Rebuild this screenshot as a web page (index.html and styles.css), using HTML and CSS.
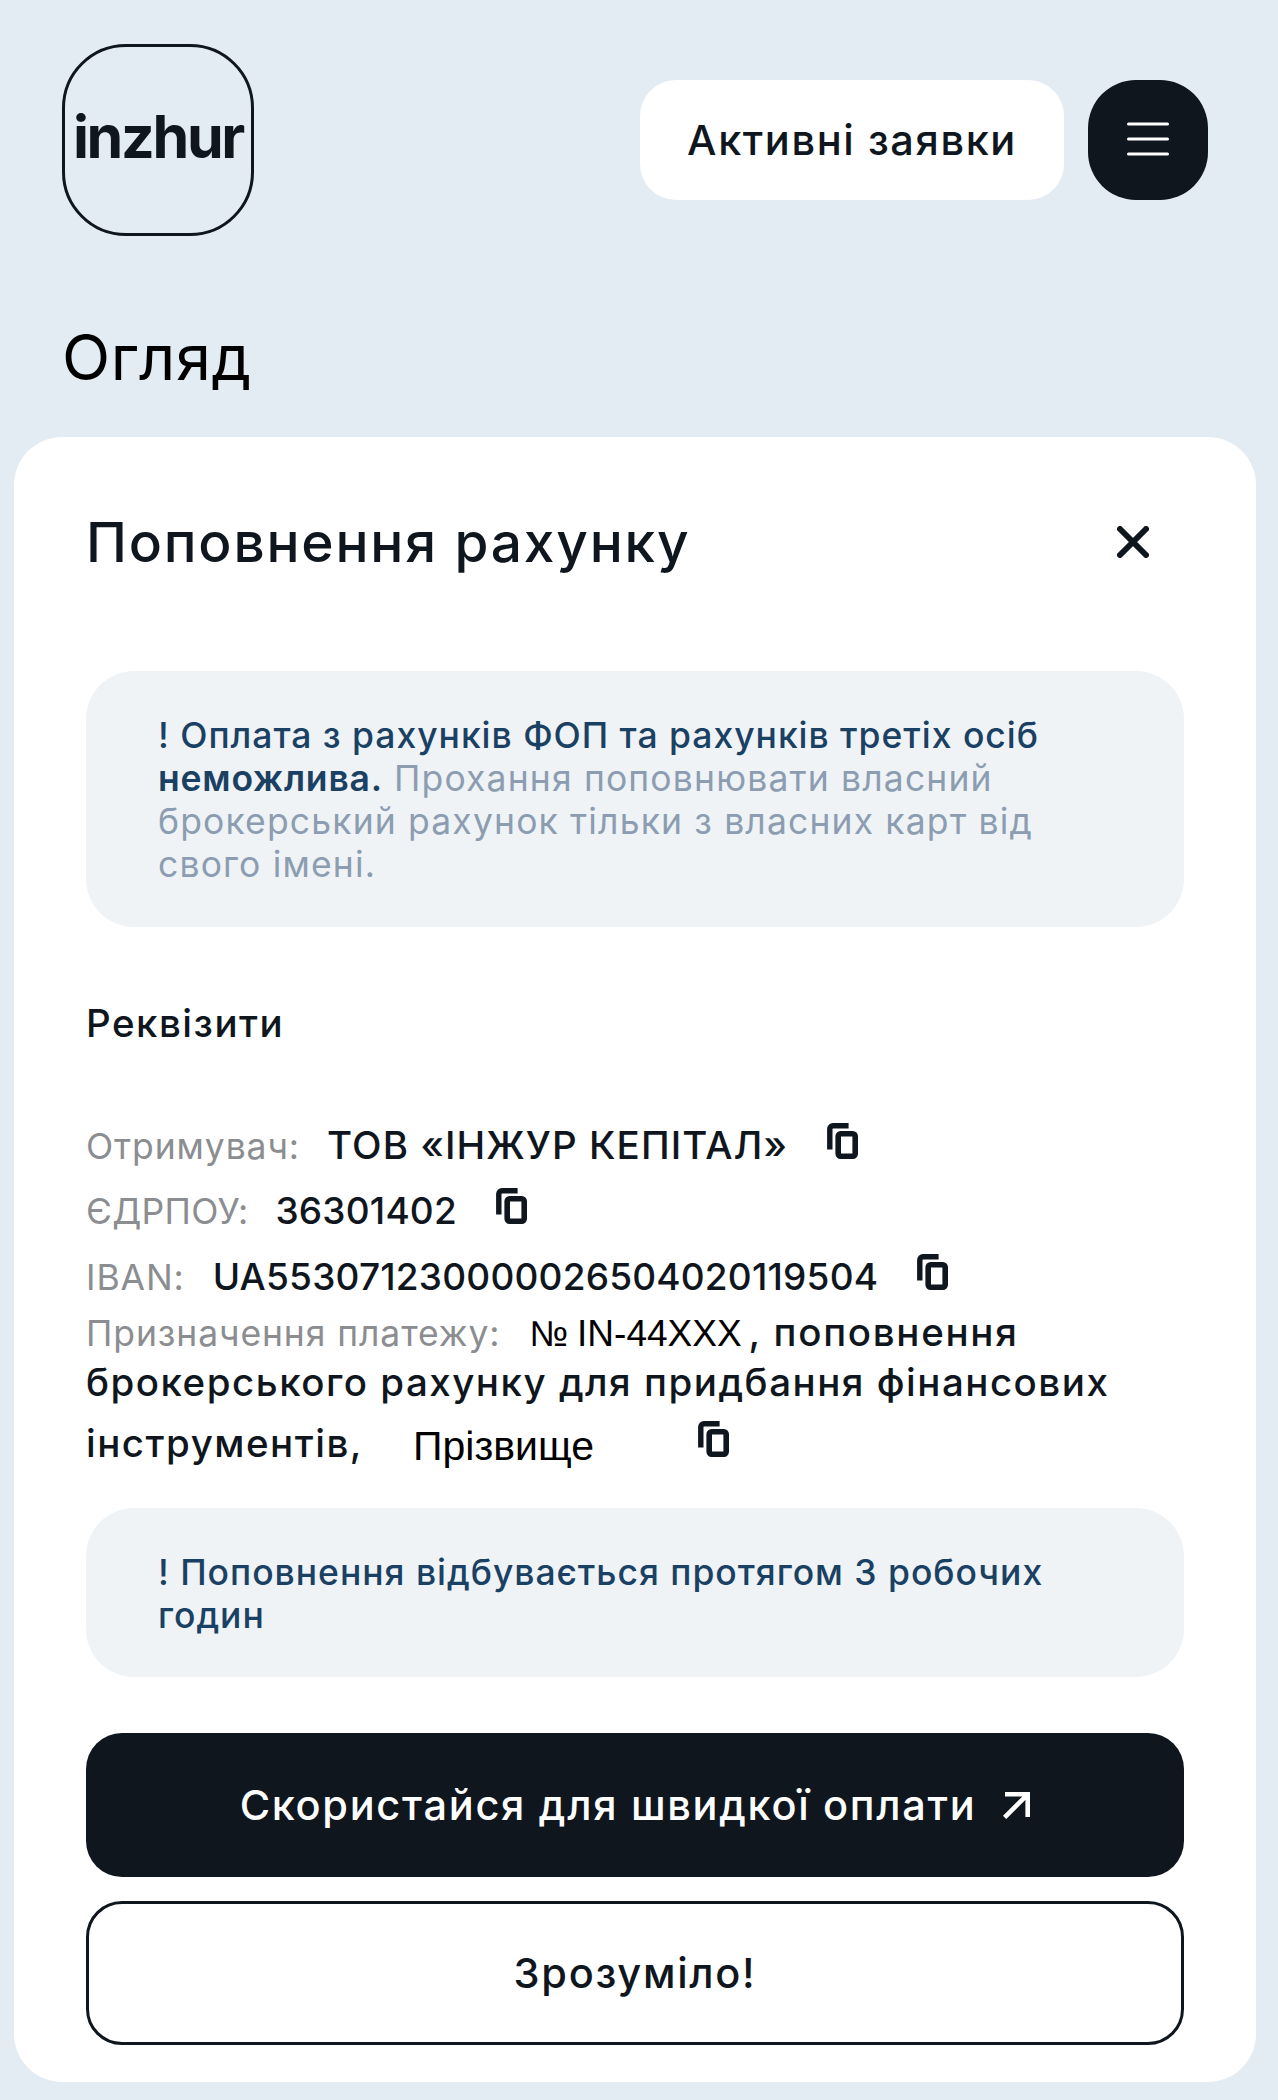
FILE: index.html
```
<!DOCTYPE html>
<html lang="uk">
<head>
  <meta charset="UTF-8">
  <meta name="viewport" content="width=device-width, initial-scale=1.0">
  <title>inzhur - Поповнення рахунку</title>
  <link rel="stylesheet" href="styles.css">
</head>
<body>
  <!-- copy icon, reused in every row -->
  <svg class="sprite" width="0" height="0">
    <symbol id="copy" viewBox="0 0 31 36">
      <path d="M2.8 26.4V6a3.2 3.2 0 0 1 3.2-3.2h15.6" fill="none" stroke="currentColor" stroke-width="5.4"/>
      <rect x="11.2" y="10.8" width="17" height="22.4" rx="2.4" fill="none" stroke="currentColor" stroke-width="5.6"/>
    </symbol>
  </svg>

  <header class="header">
    <div class="logo">inzhur</div>
    <nav class="nav">
      <button class="requests">Активні заявки</button>
      <button class="menu">
        <svg width="42" height="34" viewBox="0 0 42 34">
          <path d="M1.5 2h39M1.5 17h39M1.5 32h39" stroke="#fff" stroke-width="3" stroke-linecap="round"/>
        </svg>
      </button>
    </nav>
  </header>

  <h1 class="page-title">Огляд</h1>

  <main class="card">
    <div class="card-head">
      <h2>Поповнення рахунку</h2>
      <svg class="close" width="32" height="32" viewBox="0 0 32 32">
        <path d="M3 3l26 26M29 3L3 29" stroke="currentColor" stroke-width="6" stroke-linecap="round"/>
      </svg>
    </div>

    <div class="note">
      <b>! Оплата з рахунків ФОП та рахунків третіх осіб<br><span class="strong">неможлива.</span></b>
      Прохання поповнювати власний<br>
      брокерський рахунок тільки з власних карт від<br>
      свого імені.
    </div>

    <h3>Реквізити</h3>

    <div class="row">
      <span class="label">Отримувач:</span>
      <span class="value">ТОВ «ІНЖУР КЕПІТАЛ»</span>
      <svg class="copy"><use href="#copy"/></svg>
    </div>
    <div class="row">
      <span class="label caps">ЄДРПОУ:</span>
      <span class="value number">36301402</span>
      <svg class="copy"><use href="#copy"/></svg>
    </div>
    <div class="row">
      <span class="label iban">IBAN:</span>
      <span class="value number">UA553071230000026504020119504</span>
      <svg class="copy"><use href="#copy"/></svg>
    </div>

    <div class="purpose">
      <div class="line first">
        <span class="label">Призначення платежу:</span>
        <span class="contract"><span class="sign">№</span><span>IN-44XXX</span></span>
        <span class="tail">, поповнення</span>
      </div>
      <div class="line second">брокерського рахунку для придбання фінансових</div>
      <div class="line third">
        <span>інструментів,</span>
        <span class="surname">Прізвище</span>
        <svg class="copy"><use href="#copy"/></svg>
      </div>
    </div>

    <div class="note short">
      <b>! Поповнення відбувається протягом 3 робочих<br>годин</b>
    </div>

    <div class="actions">
      <button class="button dark">
        Скористайся для швидкої оплати
        <svg width="27" height="27" viewBox="0 0 27 27">
          <path d="M2 2.3h22.7V25M24.7 2.3L1.6 25.4" fill="none" stroke="currentColor" stroke-width="4.6"/>
        </svg>
      </button>
      <button class="button outline">Зрозуміло!</button>
    </div>
  </main>
</body>
</html>
```
FILE: styles.css
```
* {
  box-sizing: border-box;
}
body {
  margin: 0;
  padding-top: 44px;
  min-height: 2100px;
  background-color: #e3ecf2;
  color: #0f161e;
  font-family: Inter, "Liberation Sans", sans-serif;
  font-size: 38.5px;
  font-weight: 500;
}
h1, h2, h3 {
  margin: 0;
}
button {
  border: none;
  padding: 0;
  font: inherit;
  color: inherit;
  cursor: pointer;
}
.sprite {
  display: block;
}

/* header */
.header {
  display: flex;
  justify-content: space-between;
  align-items: center;
  padding: 0 70px 0 62px;
}
.logo {
  display: flex;
  justify-content: center;
  align-items: center;
  width: 192px;
  height: 192px;
  padding-bottom: 7px;
  border: 3px solid #0f161e;
  border-radius: 64px;
  font-size: 59px;
  font-weight: 700;
  letter-spacing: -2.3px;
}
.nav {
  display: flex;
  gap: 24px;
}
.requests {
  width: 424px;
  height: 120px;
  background: white;
  border-radius: 36px;
  font-size: 41.5px;
  letter-spacing: 1.6px;
}
.menu {
  display: flex;
  justify-content: center;
  align-items: center;
  width: 120px;
  height: 120px;
  padding-bottom: 3px;
  background: #0f161e;
  border-radius: 48px;
}
.page-title {
  margin: 86px 0 45px 62px;
  font-size: 63px;
  font-weight: 400;
  line-height: 70px;
  letter-spacing: 0.7px;
  color: black;
}

/* card */
.card {
  width: 1242px;
  margin-left: 14px;
  padding: 73px 72px 37px 72px;
  background: white;
  border-radius: 48px;
}
.card-head {
  display: flex;
  justify-content: space-between;
  align-items: center;
  padding-right: 35px;
}
.card-head h2 {
  font-size: 55px;
  font-weight: 500;
  line-height: 64px;
  letter-spacing: 1.8px;
}
.close {
  margin-bottom: 1px;
}
.note {
  margin-top: 97px;
  padding: 43px 40px 41px 72px;
  background: #eff3f6;
  border-radius: 48px;
  color: #8c9db1;
  font-size: 35.5px;
  font-weight: 400;
  line-height: 43px;
  letter-spacing: 1.15px;
  white-space: nowrap;
}
.note b {
  color: #1a4163;
  font-weight: 500;
  letter-spacing: 0.97px;
}
.note .strong {
  font-weight: 600;
  letter-spacing: 0.8px;
}
h3 {
  margin: 74px 0 67px;
  font-size: 38.5px;
  font-weight: 500;
  line-height: 44px;
  letter-spacing: 1.5px;
}

/* payment details */
.row {
  display: flex;
  align-items: baseline;
  height: 66px;
  line-height: 66px;
}
.label {
  margin-right: 27px;
  color: #8b8d91;
  font-size: 35.5px;
  font-weight: 400;
  letter-spacing: 0.9px;
}
.caps {
  letter-spacing: 0.3px;
}
.iban {
  margin-right: 28px;
}
.value {
  letter-spacing: 1.1px;
}
.number {
  font-size: 37px;
  letter-spacing: 0.2px;
}
.copy {
  width: 31px;
  height: 36px;
  margin: 0 0 1px 39px;
}
.line {
  display: flex;
  align-items: baseline;
  letter-spacing: 1.5px;
  white-space: nowrap;
}
.first {
  height: 44px;
  line-height: 44px;
}
.second {
  height: 56px;
  line-height: 56px;
}
.third {
  height: 66px;
  line-height: 66px;
}
.third .copy {
  margin-bottom: 0;
}
.contract {
  display: flex;
  align-items: baseline;
  gap: 9px;
  margin-left: 2px;
  color: black;
  font-family: "Liberation Sans", Arial, sans-serif;
  font-size: 37px;
  font-weight: 400;
  letter-spacing: 0;
}
.sign {
  font-size: 36px;
}
.tail {
  margin-left: 7px;
  letter-spacing: 1.7px;
}
.surname {
  margin: 0 65px 0 50px;
  color: black;
  font-family: "Liberation Sans", Arial, sans-serif;
  font-size: 41px;
  font-weight: 400;
  letter-spacing: 0;
  transform: translateY(3px);
}
.short {
  margin-top: 32px;
  padding-bottom: 40px;
}

/* buttons */
.actions {
  display: flex;
  flex-direction: column;
  gap: 24px;
  margin-top: 56px;
}
.button {
  display: flex;
  justify-content: center;
  align-items: center;
  gap: 27px;
  height: 144px;
  border-radius: 36px;
  font-size: 41.5px;
  letter-spacing: 1.7px;
}
.dark {
  background: #0f161e;
  color: white;
}
.outline {
  background: white;
  border: 3px solid #0f161e;
}
```
